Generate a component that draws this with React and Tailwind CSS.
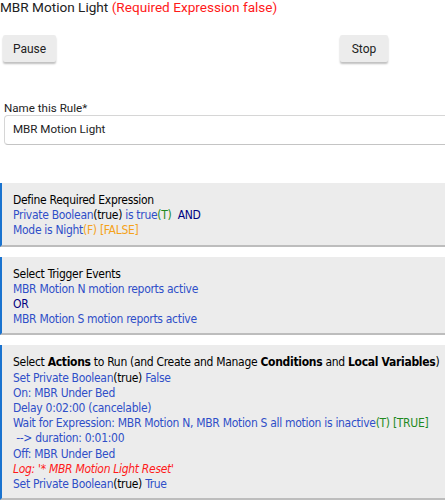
import React from "react";

const B = ({ children }) => <span className="text-[#2f4fc8]">{children}</span>;
const K = ({ children }) => <span className="text-black">{children}</span>;
const G = ({ children }) => <span className="text-[#1f8a1f]">{children}</span>;
const O = ({ children }) => <span className="text-[#f5a21a]">{children}</span>;
const N = ({ children }) => <span className="text-[#000080]">{children}</span>;

function Section({ children }) {
  return (
    <div className="w-[460px] bg-[#ececec] border-l-2 border-l-[#1a73cf] border-b-2 border-b-[#bdbdbd] pl-[11px] pt-[10px] pb-[6px] text-[12px] leading-[15.2px] tracking-[-0.3px] whitespace-nowrap text-black" style={{ fontFamily: "Tahoma, 'DejaVu Sans Condensed', 'Liberation Sans', sans-serif" }}>
      {children}
    </div>
  );
}

export default function App() {
  return (
    <div className="w-[445px] h-[500px] overflow-hidden bg-white" style={{ fontFamily: "Roboto, 'Liberation Sans', sans-serif" }}>
      <div className="text-[13.6px] leading-[16px] -mt-[1.5px] text-[#222] whitespace-nowrap">
        MBR Motion Light <span className="text-[#ff1a1a]">(Required Expression false)</span>
      </div>
      <div className="flex justify-between mt-[20.5px] pl-[3px] pr-[57px]">
        <button className="w-[53px] h-[27px] bg-[#ececec] rounded-[2px] shadow-[0_2px_2px_rgba(0,0,0,0.25)] text-[12px] text-[#222]">Pause</button>
        <button className="w-[48px] h-[27px] bg-[#ececec] rounded-[2px] shadow-[0_2px_2px_rgba(0,0,0,0.25)] text-[12px] text-[#222]">Stop</button>
      </div>
      <div className="mt-[39px] pl-[4px] text-[11.6px] leading-[14px] text-[#222]">Name this Rule*</div>
      <div className="ml-[4px] w-[460px] h-[30px] border border-[#d6d6d6] border-b-[#c4c4c4] rounded-[4px] flex items-center pl-[8px] text-[11.6px] text-[#222]">
        MBR Motion Light
      </div>
      <div className="mt-[38px] flex flex-col gap-[10px]">
        <Section>
          <div>Define Required Expression</div>
          <div><B>Private Boolean</B><K>(true)</K> <B>is true</B><G>(T)</G>&nbsp; <N>AND</N></div>
          <div><B>Mode is Night</B><O>(F) [FALSE]</O></div>
        </Section>
        <Section>
          <div>Select Trigger Events</div>
          <div><B>MBR Motion N motion reports active</B></div>
          <div><N>OR</N></div>
          <div><B>MBR Motion S motion reports active</B></div>
        </Section>
        <Section>
          <div>Select <b>Actions</b> to Run (and Create and Manage <b>Conditions</b> and <b>Local Variables</b>)</div>
          <div><B>Set Private Boolean</B><K>(true)</K> <B>False</B></div>
          <div><B>On: MBR Under Bed</B></div>
          <div><B>Delay 0:02:00 (cancelable)</B></div>
          <div><B>Wait for Expression: MBR Motion N, MBR Motion S all motion is inactive</B><G>(T) [TRUE]</G></div>
          <div><B>&nbsp;--&gt; duration: 0:01:00</B></div>
          <div><B>Off: MBR Under Bed</B></div>
          <div><i className="text-[#ff1a1a]">Log: '* MBR Motion Light Reset'</i></div>
          <div><B>Set Private Boolean</B><K>(true)</K> <B>True</B></div>
        </Section>
      </div>
    </div>
  );
}
